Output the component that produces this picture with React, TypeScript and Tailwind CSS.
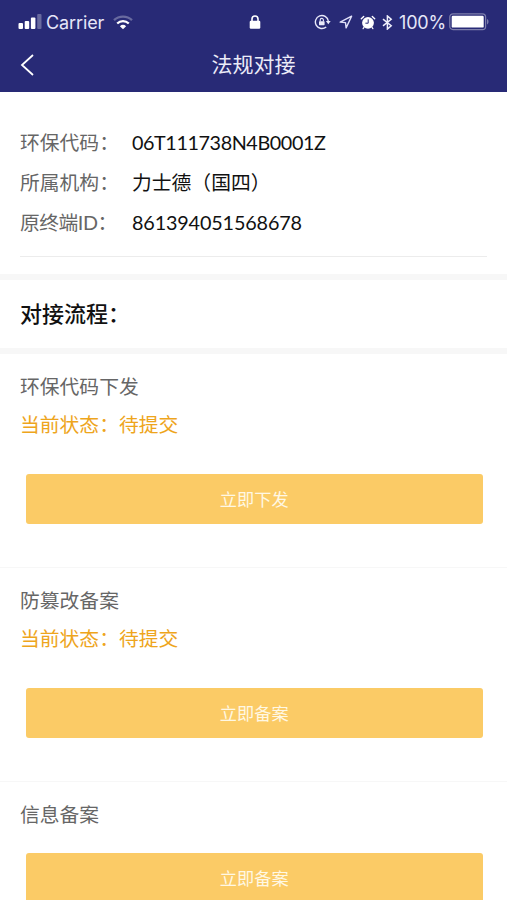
import clsx from "clsx";

interface Step {
  title: string;
  status?: string;
  action: string;
}

const info = [
  { label: "环保代码：", value: "06T111738N4B0001Z", labelSpacing: "", spacing: "tracking-[-0.42px]" },
  { label: "所属机构：", value: "力士德（国四）", labelSpacing: "", spacing: "" },
  { label: "原终端ID：", value: "861394051568678", labelSpacing: "tracking-[-0.5px]", spacing: "tracking-[-0.15px]" },
];

const steps: Step[] = [
  { title: "环保代码下发", status: "待提交", action: "立即下发" },
  { title: "防篡改备案", status: "待提交", action: "立即备案" },
  { title: "信息备案", action: "立即备案" },
];

function SignalIcon() {
  return (
    <svg width="24" height="16" viewBox="0 0 24 16" fill="#fff">
      <rect x="0.5" y="9" width="4.5" height="6" rx="1" />
      <rect x="6.7" y="7" width="4.5" height="8" rx="1" />
      <rect x="12.9" y="3.5" width="4.5" height="11.5" rx="1" />
      <rect x="19.2" y="0" width="4.3" height="15" rx="1" opacity="0.3" />
    </svg>
  );
}

function WifiIcon() {
  return (
    <svg width="20" height="15" viewBox="0 0 20 15" fill="none" stroke="#fff" strokeWidth="2.3">
      <path d="M1 5.2a13 13 0 0 1 18 0" opacity="0.3" />
      <path d="M4.2 8.5a8.4 8.4 0 0 1 11.6 0" />
      <path d="M10 14.3 6.9 11.3a4.5 4.5 0 0 1 6.2 0z" fill="#fff" stroke="none" />
    </svg>
  );
}

function LockIcon() {
  return (
    <svg className="ml-[2px]" width="12" height="14" viewBox="0 0 12 14">
      <path d="M3 7V4a3 3 0 0 1 6 0v3" fill="none" stroke="#fff" strokeWidth="1.6" />
      <rect x="0.7" y="5.8" width="10.6" height="8" rx="1.2" fill="#fff" />
    </svg>
  );
}

function RotationLockIcon() {
  return (
    <svg width="17" height="16" viewBox="0 0 17 16" fill="none" stroke="#e9e9fa" strokeWidth="1.4">
      <path d="M12.2 12.9A6.5 6.5 0 1 1 14.3 7" />
      <path d="M11.9 7h4.8l-2.4 3.2z" fill="#e9e9fa" stroke="none" />
      <rect x="5" y="7.2" width="5.6" height="4" rx="0.6" fill="#e9e9fa" stroke="none" />
      <path d="M6.2 7.4V6a1.6 1.6 0 0 1 3.2 0v1.4" strokeWidth="1.1" />
    </svg>
  );
}

function LocationIcon() {
  return (
    <svg width="14" height="14" viewBox="0 0 14 14" fill="none" stroke="#e0e0f8" strokeWidth="1.4" strokeLinejoin="round">
      <path d="M12.6 1.2 1.2 7.1l5.3.5.6 5.3z" />
    </svg>
  );
}

function AlarmIcon() {
  return (
    <svg width="16" height="15" viewBox="0 0 16 15">
      <circle cx="8" cy="7.8" r="5.9" fill="#fff" />
      <path d="M1.3 3.7 3.7 1.4M14.7 3.7l-2.4-2.3" stroke="#fff" strokeWidth="1.4" strokeLinecap="round" />
      <path d="m4 12.4-.9 1.3M12 12.4l.9 1.3" stroke="#fff" strokeWidth="1.2" strokeLinecap="round" />
      <path d="M8.2 4.3v3.9H5.4" fill="none" stroke="#282a76" strokeWidth="1" />
    </svg>
  );
}

function BluetoothIcon() {
  return (
    <svg width="11" height="15" viewBox="0 0 11 15" fill="none" stroke="#f0f0fc" strokeWidth="1.5">
      <path d="m1 4.1 8.2 6.6L5.4 14V1l3.8 3.3L1 10.9" />
    </svg>
  );
}

function BatteryIcon() {
  return (
    <svg width="41" height="18" viewBox="0 0 41 18">
      <rect x="0.8" y="0.8" width="35.8" height="15.8" rx="3.2" fill="none" stroke="#fff" strokeWidth="1.2" opacity="0.4" />
      <rect x="2.7" y="2.8" width="32" height="11.8" rx="1.2" fill="#fff" />
      <path d="M38 6v5.4c2-.7 2-4.7 0-5.4z" fill="#fff" opacity="0.4" />
    </svg>
  );
}

function StatusBar() {
  return (
    <div className="grid h-[44px] grid-cols-[1fr_auto_1fr] items-center pr-[17px] pl-[18px] font-['Inter',sans-serif] text-[18px] text-[#e6e6f8]">
      <div className="flex items-center">
        <SignalIcon />
        <span className="ml-[4px] tracking-[-0.1px]">Carrier</span>
        <span className="ml-[9px]">
          <WifiIcon />
        </span>
      </div>
      <LockIcon />
      <div className="flex items-center justify-end">
        <RotationLockIcon />
        <span className="ml-[8px]">
          <LocationIcon />
        </span>
        <span className="ml-[7px]">
          <AlarmIcon />
        </span>
        <span className="ml-[6px]">
          <BluetoothIcon />
        </span>
        <span className="ml-[6px] tracking-[-0.2px]">100%</span>
        <span className="ml-[3px]">
          <BatteryIcon />
        </span>
      </div>
    </div>
  );
}

function StepCard({ title, status, action }: Step) {
  return (
    <section className="h-[214px] border-b border-[#f7f7f7] pt-[13px]">
      <h3 className="px-5 leading-[38px] text-[#666]">{title}</h3>
      {status && (
        <p className="px-5 leading-[38px] text-[#eea51c]">当前状态：{status}</p>
      )}
      <div className={clsx("pr-6 pl-[25.5px]", status ? "pt-[31px]" : "pt-5")}>
        <button className="h-[50px] w-full rounded-[3px] bg-[#fbcb66] pt-px text-[17.2px] text-[#fff8e4]">
          {action}
        </button>
      </div>
    </section>
  );
}

export default function App() {
  return (
    <div className="h-[900px] w-[507px] overflow-hidden bg-white font-['Lato','Noto_Sans_CJK_SC',sans-serif] text-[19.8px]">
      <header className="h-[92px] bg-[#282a76]">
        <StatusBar />
        <div className="grid h-[42px] grid-cols-[1fr_auto_1fr] items-center">
          <svg className="ml-5" width="15" height="22" viewBox="0 0 15 22" fill="none" stroke="#fff" strokeWidth="1.8">
            <path d="M13 1 2 11l11 10" />
          </svg>
          <h1 className="pb-[2px] text-[21px] leading-[38px] text-[#ebebf8]">法规对接</h1>
        </div>
      </header>

      <div className="px-5 pt-[31px]">
        <dl className="h-[133px]">
          {info.map((row) => (
            <div key={row.label} className="flex h-10 items-center">
              <dt className={clsx("w-[112px] whitespace-nowrap text-[#666]", row.labelSpacing)}>
                {row.label}
              </dt>
              <dd className={clsx("text-[#111]", row.spacing)}>{row.value}</dd>
            </div>
          ))}
        </dl>
        <div className="h-px bg-[#ececec]" />
      </div>

      <h2 className="mt-[17px] h-[80px] border-y-[6px] border-[#f7f7f7] px-5 text-[22px] leading-[68px] font-medium text-[#111]">
        对接流程：
      </h2>

      {steps.map((step) => (
        <StepCard key={step.title} {...step} />
      ))}
    </div>
  );
}
